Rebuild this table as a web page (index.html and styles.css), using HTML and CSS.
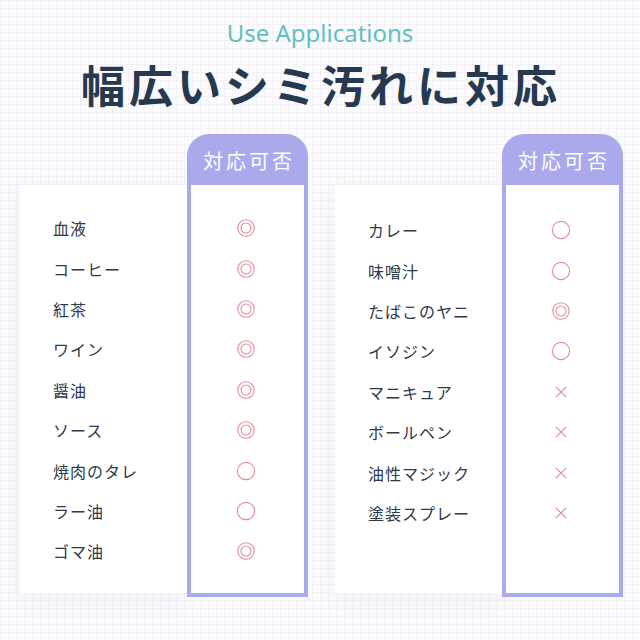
FILE: index.html
```html
<!DOCTYPE html>
<html lang="ja">
<head>
<meta charset="utf-8">
<link rel="stylesheet" href="styles.css">
</head>
<body>
<svg width="0" height="0" class="defs">
  <defs>
    <symbol id="dbl" viewBox="0 0 20 20"><circle cx="10" cy="10" r="8.2" fill="none" stroke="currentColor" stroke-width="1.1"/><circle cx="10" cy="10" r="5" fill="none" stroke="currentColor" stroke-width="1.1"/></symbol>
    <symbol id="sgl" viewBox="0 0 20 20"><circle cx="10" cy="10" r="8.6" fill="none" stroke="currentColor" stroke-width="1.1"/></symbol>
    <symbol id="crs" viewBox="0 0 20 20"><path d="M4.8 4.8 L15.2 15.2 M15.2 4.8 L4.8 15.2" fill="none" stroke="currentColor" stroke-width="1.2"/></symbol>
  </defs>
</svg>
<header class="head">
  <p class="sub">Use Applications</p>
  <h1 class="title">幅広いシミ汚れに対応</h1>
</header>
<main class="cards">
  <section class="card">
    <ul class="list">
      <li>血液</li><li>コーヒー</li><li>紅茶</li><li>ワイン</li><li>醤油</li><li>ソース</li><li>焼肉のタレ</li><li>ラー油</li><li>ゴマ油</li>
    </ul>
    <div class="col">
      <div class="col-head">対応可否</div>
      <ul class="marks">
        <li><svg><use href="#dbl"/></svg></li>
        <li><svg><use href="#dbl"/></svg></li>
        <li><svg><use href="#dbl"/></svg></li>
        <li><svg><use href="#dbl"/></svg></li>
        <li><svg><use href="#dbl"/></svg></li>
        <li><svg><use href="#dbl"/></svg></li>
        <li><svg><use href="#sgl"/></svg></li>
        <li><svg><use href="#sgl"/></svg></li>
        <li><svg><use href="#dbl"/></svg></li>
      </ul>
    </div>
  </section>
  <section class="card card-right">
    <ul class="list">
      <li>カレー</li><li>味噌汁</li><li>たばこのヤニ</li><li>イソジン</li><li>マニキュア</li><li>ボールペン</li><li>油性マジック</li><li>塗装スプレー</li>
    </ul>
    <div class="col">
      <div class="col-head">対応可否</div>
      <ul class="marks">
        <li><svg><use href="#sgl"/></svg></li>
        <li><svg><use href="#sgl"/></svg></li>
        <li><svg><use href="#dbl"/></svg></li>
        <li><svg><use href="#sgl"/></svg></li>
        <li><svg class="x"><use href="#crs"/></svg></li>
        <li><svg class="x"><use href="#crs"/></svg></li>
        <li><svg class="x"><use href="#crs"/></svg></li>
        <li><svg class="x"><use href="#crs"/></svg></li>
      </ul>
    </div>
  </section>
</main>
</body>
</html>
```
FILE: styles.css
```css
* { box-sizing: border-box; }
html, body { margin: 0; padding: 0; }
body {
  width: 640px;
  height: 640px;
  overflow: hidden;
  font-family: "Noto Sans CJK JP", "Noto Sans", sans-serif;
  background-color: #fbfbfd;
  background-image:
    linear-gradient(to right, rgba(200, 200, 222, 0.16) 1px, transparent 1px),
    linear-gradient(to bottom, rgba(200, 200, 222, 0.16) 1px, transparent 1px);
  background-size: 8px 8px;
}
.defs { position: absolute; width: 0; height: 0; }
.head { text-align: center; padding-top: 16px; }
.sub {
  margin: 0;
  font-family: "Noto Sans", sans-serif;
  font-size: 24px;
  line-height: 34px;
  font-weight: 400;
  color: #62bfc0;
}
.title {
  margin: 0;
  margin-top: 4px;
  font-family: "Noto Sans CJK JP", sans-serif;
  font-size: 44px;
  line-height: 60px;
  font-weight: 700;
  color: #27394f;
  letter-spacing: 4px;
  padding-left: 2px;
}
.cards {
  display: flex;
  gap: 27px;
  padding-left: 20px;
  margin-top: 20px;
}
.card { display: flex; width: 288px; }
.list {
  list-style: none;
  margin: 51px 0 4px;
  padding: 23px 0 0 33px;
  width: 167px;
  background: #fff;
  box-shadow: 0 6px 22px rgba(150, 150, 200, 0.12);
}
.list li, .marks li {
  height: 40.4px;
  display: flex;
  align-items: center;
}
.list li {
  font-size: 16px;
  letter-spacing: 1px;
  color: #2f3a4b;
  white-space: nowrap;
}
.card-right .list { padding-top: 25px; }
.card-right .marks { padding-top: 25px; }
.col { width: 121px; display: flex; flex-direction: column; }
.col-head {
  height: 51px;
  background: #a9a9ec;
  border-radius: 22px 22px 0 0;
  color: #fff;
  font-size: 20px;
  letter-spacing: 3px;
  text-align: center;
  padding-top: 13px;
  padding-left: 3px;
  line-height: 28px;
}
.marks {
  list-style: none;
  margin: 0;
  padding: 23px 0 0;
  height: 412px;
  background: #fff;
  border: 4px solid #a9a9ec;
  border-top: 0;
}
.marks li { justify-content: center; padding-right: 4px; }
.marks svg { width: 20px; height: 20px; color: #e68b99; }
```
